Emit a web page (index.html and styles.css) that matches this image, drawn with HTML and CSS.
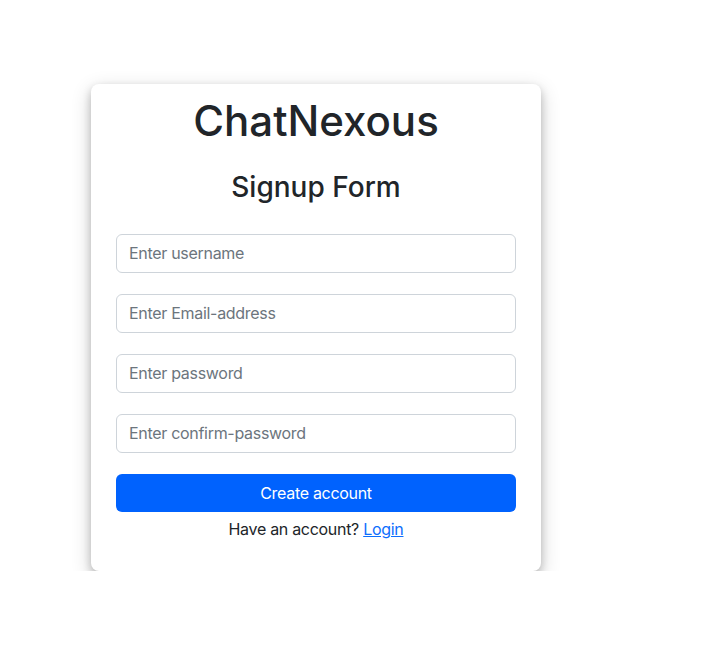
FILE: index.html
```html
<!DOCTYPE html>
<html lang="en">
<head>
<meta charset="utf-8">
<title>ChatNexous - Signup</title>
<link rel="stylesheet" href="styles.css">
</head>
<body>
<div class="page">
  <div class="card">
    <h1 class="brand">ChatNexous</h1>
    <h3 class="form-title">Signup Form</h3>
    <form class="form">
      <input class="field" type="text" placeholder="Enter username">
      <input class="field" type="email" placeholder="Enter Email-address">
      <input class="field" type="password" placeholder="Enter password">
      <input class="field" type="password" placeholder="Enter confirm-password">
      <button class="btn" type="button">Create account</button>
    </form>
    <p class="footer-text">Have an account? <a href="#" class="link">Login</a></p>
  </div>
</div>
</body>
</html>
```
FILE: styles.css
```css
* { box-sizing: border-box; }
html, body { margin: 0; padding: 0; background: #fff; }
body {
  font-family: Inter, "Liberation Sans", Arial, sans-serif;
  color: #212529;
  font-size: 16px;
  line-height: 1.5;
}
.page {
  padding: 84px 0 0 91px;
}
.card {
  width: 450px;
  background: #fff;
  border-radius: 8px;
  box-shadow: 0 4px 8px 0 rgba(0,0,0,0.2), 0 6px 20px 0 rgba(0,0,0,0.19);
  padding: 12px 25px 30px;
  display: flex;
  flex-direction: column;
  align-items: stretch;
}
.brand {
  margin: 0;
  text-align: center;
  font-size: 42px;
  font-weight: 500;
  line-height: 1.2;
}
.form-title {
  margin: 25px 0 0;
  text-align: center;
  font-size: 28px;
  font-weight: 500;
  line-height: 1.2;
}
.form {
  margin-top: 29px;
  display: flex;
  flex-direction: column;
  gap: 21px;
}
.field {
  display: block;
  width: 100%;
  height: 39px;
  padding: 6px 12px;
  font: inherit;
  font-size: 16px;
  letter-spacing: -0.3px;
  color: #212529;
  border: 1px solid #ced4da;
  border-radius: 6px;
  background: #fff;
}
.field::placeholder { color: #6c757d; opacity: 1; }
.btn {
  height: 38px;
  width: 100%;
  border: none;
  border-radius: 6px;
  background: #0062fe;
  color: #fff;
  font: inherit;
  font-size: 16px;
  letter-spacing: -0.3px;
}
.footer-text {
  margin: 5px 0 0;
  text-align: center;
  letter-spacing: -0.3px;
}
.link { color: #0d6efd; text-decoration: underline; }
```
